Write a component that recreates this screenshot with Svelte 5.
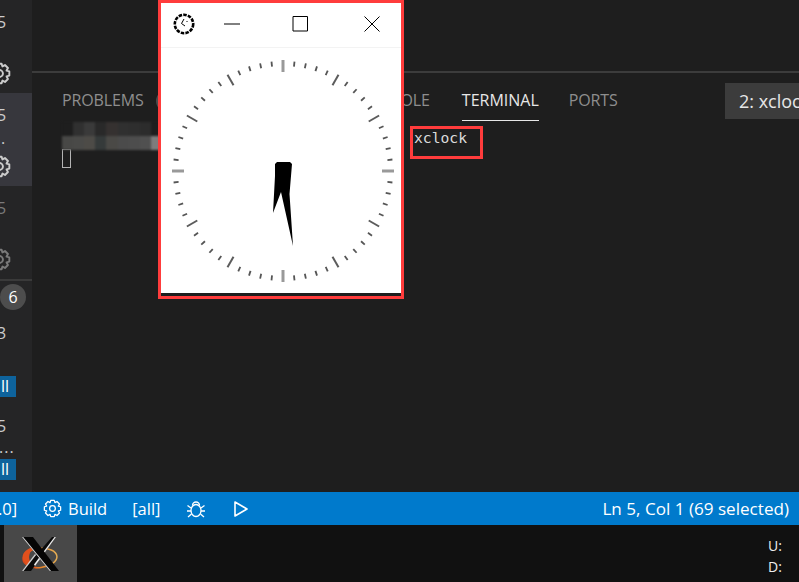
<script lang="ts">
  const cx = 122;
  const cy = 123;

  // 60 tick marks of the xclock face, the 5 minute ones are longer
  const ticks = Array.from({ length: 60 }, (_, i) => {
    const a = (i * Math.PI) / 30;
    const major = i % 5 === 0;
    const cardinal = i % 15 === 0;
    const inner = major ? 99 : 105;
    const outer = major ? 111 : 110;
    return {
      x1: cx + Math.sin(a) * inner,
      y1: cy - Math.cos(a) * inner,
      x2: cx + Math.sin(a) * outer,
      y2: cy - Math.cos(a) * outer,
      cls: cardinal ? "tick cardinal" : major ? "tick major" : "tick"
    };
  });

  function gearPath(c: number, outer: number, inner: number, teeth = 8) {
    const pts: string[] = [];
    const step = (Math.PI * 2) / teeth;
    for (let i = 0; i < teeth; i++) {
      const a = i * step;
      const offsets = [
        [-0.5, inner],
        [-0.27, outer],
        [0.27, outer],
        [0.5, inner]
      ];
      for (const [o, r] of offsets) {
        const t = a + o * step;
        pts.push(`${(c + Math.cos(t) * r).toFixed(2)} ${(c + Math.sin(t) * r).toFixed(2)}`);
      }
    }
    return "M" + pts.join("L") + "Z";
  }

  const gear = gearPath(12, 10.5, 8);

  const rows = [
    { num: "5", dot: "", selected: false, dim: false },
    { num: "5", dot: ".", selected: true, dim: false },
    { num: "5", dot: "", selected: false, dim: true }
  ];

  const mosaic = [
    ["#1e1e1e", "#303030", "#3a3a3a", "#292929", "#353130", "#303030", "#2e2e2e", "#2c2c2c", "#1e1e1e"],
    ["#484846", "#4a4a48", "#4d4b47", "#353a3a", "#4a4946", "#4b4b4b", "#4d4d4d", "#505050", "#7d7d7d"]
  ];
</script>

<div class="screen">
  <div class="workspace">
    <aside class="sidebar">
      {#each rows as row}
        <div class="row" class:selected={row.selected} class:dim={row.dim}>
          <span class="num">{row.num}</span>
          <span class="dot">{row.dot}</span>
          <svg class="gear" viewBox="0 0 24 24" width="23" height="23">
            <path d={gear} /><circle cx="12" cy="12" r="3.6" />
          </svg>
        </div>
      {/each}
      <div class="lower">
        <span class="badge">6</span>
        <span class="num three">3</span>
        <span class="all">ll</span>
        <span class="num five">5</span>
        <span class="dots">...</span>
        <span class="all">ll</span>
      </div>
    </aside>

    <main class="main">
      <div class="editor"></div>
      <section class="panel">
        <nav class="tabs">
          <span class="tab">PROBLEMS</span>
          <span class="count"></span>
          <span class="tab">OUTPUT</span>
          <span class="tab">DEBUG CONSOLE</span>
          <span class="tab active">TERMINAL</span>
          <span class="tab">PORTS</span>
          <span class="selector">2: xclock</span>
        </nav>
        <div class="terminal">
          <div class="line">
            <div class="mosaic">
              {#each mosaic as strip}
                <div class="strip">
                  {#each strip as colour}
                    <i style:background={colour}></i>
                  {/each}
                </div>
              {/each}
            </div>
            <span class="command">xclock</span>
          </div>
          <span class="cursor"></span>
        </div>
      </section>
    </main>
  </div>

  <footer class="status">
    <div class="group">
      <span class="clip">.0]</span>
      <svg class="status-gear" viewBox="0 0 24 24" width="19" height="19">
        <path d={gear} /><circle cx="12" cy="12" r="3.6" />
      </svg>
      <span class="build">Build</span>
      <span class="target">[all]</span>
      <svg class="bug" viewBox="0 0 20 20" width="20" height="20">
        <ellipse cx="10" cy="11.5" rx="5" ry="6" />
        <path d="M6.5 6.5a3.5 3.5 0 0 1 7 0M5 9 1.5 6.5M15 9l3.5-2.500M5 12H1M15 12h4M5.500 15 2 18M14.500 15l3.500 3" />
      </svg>
      <svg class="play" viewBox="0 0 16 18" width="16" height="18">
        <path d="M2 2 14 9 2 16Z" />
      </svg>
    </div>
    <span class="position">Ln 5, Col 1 (69 selected)</span>
  </footer>

  <div class="taskbar">
    <div class="tile">
      <svg viewBox="0 0 73 57" width="73" height="57">
        <defs>
          <linearGradient id="ring" x1="0" x2="1" y1="0" y2="0">
            <stop offset="0" stop-color="#d9461a" />
            <stop offset="0.5" stop-color="#e88426" />
            <stop offset="1" stop-color="#e2ad55" />
          </linearGradient>
        </defs>
        <ellipse cx="36" cy="33" rx="17" ry="9.500" transform="rotate(-6 36 33)" fill="none" stroke="url(#ring)" stroke-width="1.500" />
        <path d="M31 22C15 24 13 40 34 44 25 39 21 30 31 22Z" fill="#e2501c" />
        <path d="M48 12h4L27 46H18Z" fill="#0a0a0a" />
        <path d="M50.500 12h1.500L31 41l-1-1.500Z" fill="#ececec" />
        <path d="M18 46h1.500L32 30l-1-1Z" fill="#d0d0d0" />
        <path d="M18 12h11l26 34H46Z" fill="#050505" />
        <path d="M18 12h1.200L47 46h-1.200Z" fill="#dcdcdc" />
      </svg>
    </div>
    <div class="speed">
      <span>U:</span>
      <span>D:</span>
    </div>
  </div>

  <!-- floating X11 window on top of VS Code -->
  <div class="window">
    <header class="titlebar">
      <svg class="app-icon" viewBox="0 0 24 24" width="24" height="24">
        <circle class="ring" cx="12" cy="12" r="9.200" />
        <path d="M12 7 9.500 11.500 13 14M15 9v1" />
      </svg>
      <svg class="ctl minimize" viewBox="0 0 16 16" width="16" height="16"><path d="M0 8h16" /></svg>
      <svg class="ctl maximize" viewBox="0 0 16 16" width="16" height="16"><path d="M1 .500h14.500v14.500H1Z" /></svg>
      <svg class="ctl close" viewBox="0 0 16 16" width="16" height="16"><path d="M.5.500 15.500 15.500M15.500.500.5 15.500" /></svg>
    </header>
    <div class="face">
      <svg viewBox="0 0 240 246" width="240" height="246">
        <g class="soft">
          {#each ticks as t}
            <line class={t.cls} x1={t.x1} y1={t.y1} x2={t.x2} y2={t.y2} />
          {/each}
          <polygon points="114,116 116,114 129,114 131,116 128.500,146 132,198 120,144 112,165 114,128" />
        </g>
      </svg>
    </div>
  </div>

  <div class="callout"></div>
</div>

<style>
  :global(body) {
    margin: 0;
    background: #1e1e1e;
  }
  .screen {
    position: relative;
    display: grid;
    grid-template-rows: 492px 33px 57px;
    width: 799px;
    height: 582px;
    overflow: hidden;
    font-family: "Open Sans", "Noto Sans", sans-serif;
  }
  .workspace {
    display: flex;
    min-height: 0;
  }
  .sidebar {
    flex: none;
    width: 32px;
    overflow: hidden;
    background: #252526;
    color: #cccccc;
    font-size: 16px;
  }
  .row {
    display: flex;
    flex-direction: column;
    height: 93px;
    padding-top: 12px;
    box-sizing: border-box;
  }
  .row.selected {
    background: #37373d;
  }
  .row.dim {
    color: #7a7a7a;
  }
  .num {
    display: block;
    margin-left: -3px;
    line-height: 20px;
  }
  .dot {
    height: 19px;
    margin-top: 4px;
    margin-left: 1px;
    line-height: 19px;
  }
  .gear {
    margin: 7px 0 0 -12px;
    fill: none;
    stroke: currentColor;
    stroke-width: 2;
    stroke-linejoin: round;
  }
  .lower {
    display: flex;
    flex-direction: column;
    align-items: flex-start;
    height: 213px;
    border-top: 2px solid #3a3a3a;
    box-sizing: border-box;
  }
  .badge {
    display: grid;
    place-items: center;
    width: 26px;
    height: 26px;
    margin-top: 3px;
    border-radius: 50%;
    background: #4d4d4d;
    color: #fff;
    font-size: 16px;
  }
  .three {
    margin-top: 13px;
  }
  .all {
    width: 16px;
    height: 21px;
    margin-top: 33px;
    background: #0e639c;
    color: #fff;
    font-size: 16px;
    line-height: 21px;
    text-indent: 1px;
  }
  .five {
    margin-top: 19px;
  }
  .dots {
    height: 24px;
    margin-top: -1px;
    margin-left: -1px;
    letter-spacing: 1px;
    line-height: 24px;
  }
  .lower .all:last-child {
    margin-top: 0;
  }
  .main {
    flex: 1;
    min-width: 0;
    background: #1e1e1e;
  }
  .editor {
    height: 71px;
    border-bottom: 2px solid #3c3c3c;
  }
  .tabs {
    display: flex;
    align-items: center;
    gap: 30px;
    height: 41px;
    padding: 7px 0 0 30px;
    font-size: 16px;
    white-space: nowrap;
  }
  .tab {
    position: relative;
    line-height: 41px;
    letter-spacing: -0.12px;
    color: #8e8e8e;
  }
  .tab.active {
    margin-left: 2px;
    letter-spacing: 0;
    color: #e7e7e7;
  }
  .tab.active::after {
    content: "";
    position: absolute;
    left: 0;
    right: 0;
    bottom: 0;
    height: 1px;
    background: #e7e7e7;
  }
  .count {
    flex: none;
    width: 22px;
    height: 22px;
    margin-left: -18px;
    border-radius: 50%;
    background: #4d4d4d;
  }
  .selector {
    flex: none;
    width: 60px;
    height: 36px;
    margin-left: auto;
    padding-left: 14px;
    overflow: hidden;
    background: #3c3c3c;
    color: #e7e7e7;
    font-size: 18px;
    line-height: 36px;
  }
  .terminal {
    padding-left: 30px;
  }
  .line {
    display: flex;
    height: 28px;
  }
  .mosaic {
    width: 100px;
    margin-top: 1px;
    filter: blur(1px);
  }
  .strip {
    display: flex;
    height: 14px;
  }
  .strip i {
    flex: 1;
  }
  .command {
    margin-left: 252px;
    margin-top: 7px;
    color: #dcdcdc;
    font-family: "DejaVu Sans Mono", monospace;
    font-size: 14.7px;
    line-height: 20px;
  }
  .cursor {
    display: block;
    width: 7px;
    height: 17px;
    border: 1px solid #b4b4b4;
  }
  .status {
    display: flex;
    align-items: center;
    justify-content: space-between;
    padding-right: 10px;
    background: #007acc;
    color: #fff;
    font-size: 16.500px;
    white-space: nowrap;
  }
  .group {
    display: flex;
    align-items: center;
  }
  .clip {
    width: 19px;
    margin-left: -2px;
  }
  .status-gear,
  .bug,
  .play {
    fill: none;
    stroke: #fff;
    stroke-width: 1.600;
    stroke-linejoin: round;
  }
  .status-gear {
    margin-left: 26px;
  }
  .build {
    margin-left: 6px;
  }
  .target {
    margin-left: 25px;
  }
  .bug {
    margin-left: 25px;
    stroke-width: 1.300;
  }
  .play {
    margin-left: 27px;
  }
  .position {
    font-size: 17.1px;
  }
  .taskbar {
    display: flex;
    justify-content: space-between;
    background: #111111;
  }
  .tile {
    width: 73px;
    margin-left: 4px;
    background: #484848;
  }
  .tile svg {
    display: block;
  }
  .speed {
    display: flex;
    flex-direction: column;
    width: 31px;
    padding-top: 10px;
    color: #eeeeee;
    font-size: 14px;
    line-height: 21px;
  }
  .window {
    position: absolute;
    left: 158px;
    top: 0;
    box-sizing: border-box;
    width: 246px;
    height: 299px;
    border: 3px solid #ff3c3c;
    background: #1e1e1e;
  }
  .titlebar {
    display: flex;
    align-items: center;
    height: 44px;
    border-bottom: 1px solid #f3f3f3;
    background: #fff;
  }
  .titlebar svg {
    flex: none;
  }
  .app-icon {
    margin: 0 0 2px 11px;
    fill: none;
    stroke: #000;
  }
  .ring {
    stroke-width: 2.600;
    stroke-dasharray: 3.500 1.200;
  }
  .ctl {
    fill: none;
    stroke: #000;
    stroke-width: 1;
    margin-bottom: 3px;
  }
  .minimize {
    margin-left: 28px;
  }
  .maximize {
    margin-left: 52px;
  }
  .close {
    margin-left: 56px;
  }
  .face {
    height: 245px;
    background: #fff;
    overflow: hidden;
  }
  .face svg {
    display: block;
  }
  .soft {
    filter: blur(0.7px);
  }
  .tick {
    stroke: #555;
    stroke-width: 1.800;
  }
  .major {
    stroke: #5c5c5c;
    stroke-width: 2;
  }
  .cardinal {
    stroke: #999;
    stroke-width: 3;
  }
  .callout {
    position: absolute;
    left: 410px;
    top: 126px;
    width: 67px;
    height: 27px;
    border: 3px solid #ff3c3c;
  }
</style>
